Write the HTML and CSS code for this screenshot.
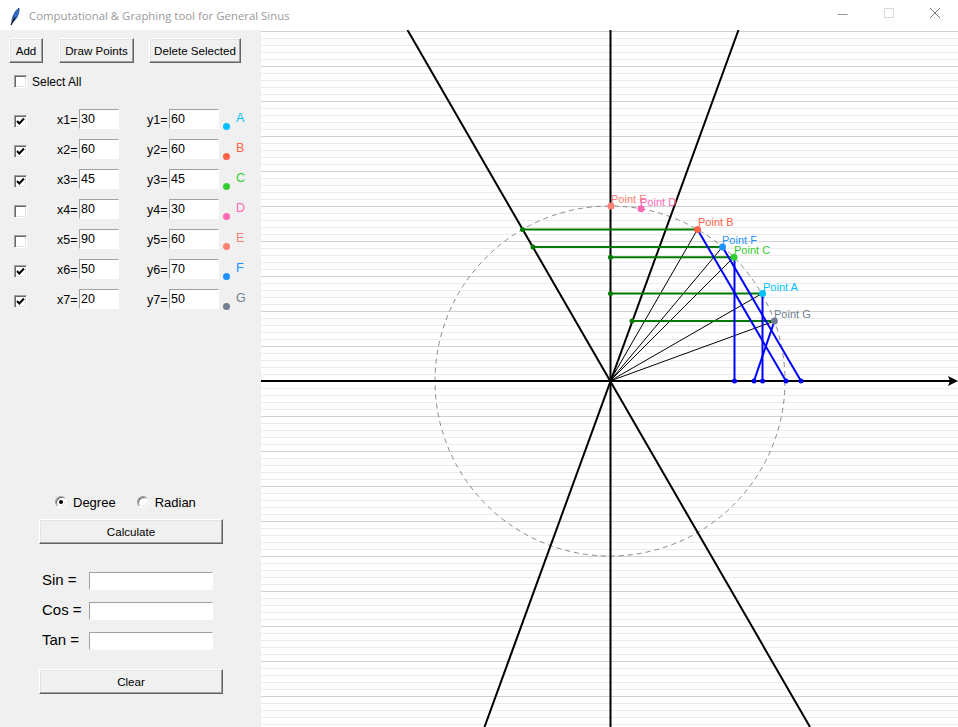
FILE: index.html
```html
<!DOCTYPE html>
<html>
<head>
<meta charset="utf-8">
<title>Computational &amp; Graphing tool for General Sinus</title>
<link rel="stylesheet" href="styles.css">
</head>
<body>
<div class="window">
  <div class="titlebar">
    <svg class="feather" width="20" height="24" viewBox="0 0 20 24">
      <path d="M5 20 C4.5 14 8 8 12 5 C12.5 10 10 16 5 20 Z" fill="#2f6fd0" stroke="#1b3f80" stroke-width="0.8"/>
      <path d="M4 22 L8 14" stroke="#111" stroke-width="1.2"/>
    </svg>
    <span class="title">Computational &amp; Graphing tool for General Sinus</span>
    <div class="controls">
      <svg width="46" height="30" viewBox="0 0 46 30"><path d="M17.5 14.5 H27.5" stroke="#9a9a9a" stroke-width="1"/></svg>
      <svg width="46" height="30" viewBox="0 0 46 30"><rect x="18.5" y="8.5" width="9" height="9" fill="none" stroke="#d8d8d8" stroke-width="1"/></svg>
      <svg width="46" height="30" viewBox="0 0 46 30"><path d="M18 8 L28 18 M28 8 L18 18" stroke="#777" stroke-width="1"/></svg>
    </div>
  </div>
  <div class="main">
    <div class="panel">
      <div class="toolbar">
        <button class="btn btn-add">Add</button>
        <button class="btn btn-draw">Draw Points</button>
        <button class="btn btn-del">Delete Selected</button>
      </div>
      <div class="selectall">
        <span class="check"></span>
        <span class="lbl">Select All</span>
      </div>
      <div class="points">
        <div class="prow">
          <span class="check checked"><svg width="11" height="11" viewBox="0 0 11 11"><path d="M2 5 L4.3 7.5 L9 2.5" fill="none" stroke="#000" stroke-width="2"/></svg></span>
          <span class="xl">x1=</span><span class="entry ex">30</span>
          <span class="yl">y1=</span><span class="entry ey">60</span>
          <span class="dot c-a"></span><span class="letter t-a">A</span>
        </div>
        <div class="prow">
          <span class="check checked"><svg width="11" height="11" viewBox="0 0 11 11"><path d="M2 5 L4.3 7.5 L9 2.5" fill="none" stroke="#000" stroke-width="2"/></svg></span>
          <span class="xl">x2=</span><span class="entry ex">60</span>
          <span class="yl">y2=</span><span class="entry ey">60</span>
          <span class="dot c-b"></span><span class="letter t-b">B</span>
        </div>
        <div class="prow">
          <span class="check checked"><svg width="11" height="11" viewBox="0 0 11 11"><path d="M2 5 L4.3 7.5 L9 2.5" fill="none" stroke="#000" stroke-width="2"/></svg></span>
          <span class="xl">x3=</span><span class="entry ex">45</span>
          <span class="yl">y3=</span><span class="entry ey">45</span>
          <span class="dot c-c"></span><span class="letter t-c">C</span>
        </div>
        <div class="prow">
          <span class="check"></span>
          <span class="xl">x4=</span><span class="entry ex">80</span>
          <span class="yl">y4=</span><span class="entry ey">30</span>
          <span class="dot c-d"></span><span class="letter t-d">D</span>
        </div>
        <div class="prow">
          <span class="check"></span>
          <span class="xl">x5=</span><span class="entry ex">90</span>
          <span class="yl">y5=</span><span class="entry ey">60</span>
          <span class="dot c-e"></span><span class="letter t-e">E</span>
        </div>
        <div class="prow">
          <span class="check checked"><svg width="11" height="11" viewBox="0 0 11 11"><path d="M2 5 L4.3 7.5 L9 2.5" fill="none" stroke="#000" stroke-width="2"/></svg></span>
          <span class="xl">x6=</span><span class="entry ex">50</span>
          <span class="yl">y6=</span><span class="entry ey">70</span>
          <span class="dot c-f"></span><span class="letter t-f">F</span>
        </div>
        <div class="prow">
          <span class="check checked"><svg width="11" height="11" viewBox="0 0 11 11"><path d="M2 5 L4.3 7.5 L9 2.5" fill="none" stroke="#000" stroke-width="2"/></svg></span>
          <span class="xl">x7=</span><span class="entry ex">20</span>
          <span class="yl">y7=</span><span class="entry ey">50</span>
          <span class="dot c-g"></span><span class="letter t-g">G</span>
        </div>
      </div>
      <div class="radios">
        <span class="radio on"></span><span class="rlbl">Degree</span>
        <span class="radio r2"></span><span class="rlbl">Radian</span>
      </div>
      <button class="btn wide btn-calc">Calculate</button>
      <div class="results">
        <div class="rrow"><span class="rlabel">Sin =</span><span class="entry rentry"></span></div>
        <div class="rrow"><span class="rlabel">Cos =</span><span class="entry rentry"></span></div>
        <div class="rrow"><span class="rlabel">Tan =</span><span class="entry rentry"></span></div>
      </div>
      <button class="btn wide btn-clear">Clear</button>
    </div>
    <div class="canvas">
      <svg class="plot" width="697" height="697" viewBox="261 30 697 697">
        <circle cx="610" cy="381" r="175" fill="none" stroke="#8a8a8a" stroke-width="1" stroke-dasharray="5 4"/>
        <line x1="610.5" y1="30" x2="610.5" y2="727" stroke="#000" stroke-width="2"/>
        <line x1="261" y1="381" x2="950" y2="381" stroke="#000" stroke-width="2"/>
        <polygon points="958,381 948,376 950,381 948,386" fill="#000"/>
        <line x1="407.5" y1="30" x2="810" y2="727" stroke="#000" stroke-width="2"/>
        <line x1="738.5" y1="30" x2="484.5" y2="727" stroke="#000" stroke-width="2"/>
        <g stroke="#000" stroke-width="1">
          <line x1="610" y1="381" x2="762" y2="293.5"/>
          <line x1="610" y1="381" x2="697.5" y2="229.4"/>
          <line x1="610" y1="381" x2="733.7" y2="257.3"/>
          <line x1="610" y1="381" x2="722.5" y2="246.9"/>
          <line x1="610" y1="381" x2="774.4" y2="321.1"/>
        </g>
        <g stroke="#007a00" stroke-width="2">
          <line x1="522.5" y1="229.4" x2="697.5" y2="229.4"/>
          <line x1="533" y1="246.9" x2="722.5" y2="246.9"/>
          <line x1="610" y1="257.3" x2="733.7" y2="257.3"/>
          <line x1="610" y1="293.5" x2="762" y2="293.5"/>
          <line x1="632" y1="321.1" x2="774.4" y2="321.1"/>
        </g>
        <g fill="#007a00">
          <circle cx="522.5" cy="229.4" r="2.5"/>
          <circle cx="533" cy="246.9" r="2.5"/>
          <circle cx="610.5" cy="257.3" r="2.5"/>
          <circle cx="610.5" cy="293.5" r="2.5"/>
          <circle cx="632" cy="321.1" r="2.5"/>
        </g>
        <g stroke="#0000ff" stroke-width="2">
          <line x1="762.5" y1="293.5" x2="762.5" y2="381"/>
          <line x1="734.5" y1="257.3" x2="734.5" y2="381"/>
          <line x1="697.5" y1="229.4" x2="786" y2="381"/>
          <line x1="722.5" y1="246.9" x2="801" y2="381"/>
          <line x1="774.4" y1="321.1" x2="754" y2="381"/>
        </g>
        <g fill="#0000ff">
          <circle cx="762.5" cy="381" r="2.5"/>
          <circle cx="734.5" cy="381" r="2.5"/>
          <circle cx="786" cy="381" r="2.5"/>
          <circle cx="801" cy="381" r="2.5"/>
          <circle cx="754" cy="381" r="2.5"/>
        </g>
        <circle cx="762.5" cy="293.5" r="3.5" fill="#00bfff"/>
        <circle cx="697.5" cy="229.4" r="3.5" fill="#ff6347"/>
        <circle cx="734" cy="257.3" r="3.5" fill="#32cd32"/>
        <circle cx="641" cy="208.7" r="3.5" fill="#ff69b4"/>
        <circle cx="611" cy="206" r="3.5" fill="#fa8072"/>
        <circle cx="722.5" cy="246.9" r="3.5" fill="#1e90ff"/>
        <circle cx="774.4" cy="321.1" r="3.5" fill="#708090"/>
        <g class="plabel">
          <text x="611" y="203" fill="#fa8072">Point E</text>
          <text x="640" y="206" fill="#ff69b4">Point D</text>
          <text x="698" y="226" fill="#ff6347">Point B</text>
          <text x="722" y="244" fill="#1e90ff">Point F</text>
          <text x="734" y="254" fill="#32cd32">Point C</text>
          <text x="763" y="291" fill="#00bfff">Point A</text>
          <text x="774" y="318" fill="#708090">Point G</text>
        </g>
      </svg>
    </div>
  </div>
</div>
</body>
</html>
```

FILE: styles.css
```css
* { box-sizing: border-box; }
html, body { margin: 0; padding: 0; }
body {
  width: 958px;
  height: 727px;
  overflow: hidden;
  background: #fff;
  font-family: "Liberation Sans", Arial, sans-serif;
  color: #000;
}
.window { width: 958px; height: 727px; display: flex; flex-direction: column; }

.titlebar {
  height: 30px;
  background: #fff;
  display: flex;
  align-items: center;
  flex: none;
}
.feather { margin-left: 7px; flex: none; }
.title {
  margin-left: 2px;
  font-family: "Open Sans", "Noto Sans", sans-serif;
  font-size: 11.4px;
  color: #9a9a9a;
}
.controls { margin-left: auto; display: flex; }
.controls svg { display: block; }

.main { display: flex; flex: 1; min-height: 0; }

.panel {
  width: 261px;
  flex: none;
  background: #f0f0f0;
  display: flex;
  flex-direction: column;
}

.btn {
  font-family: "Liberation Sans", Arial, sans-serif;
  font-size: 11.6px;
  color: #000;
  height: 25px;
  padding: 0;
  background: #f0f0f0;
  border: 1px solid;
  border-color: #fff #646464 #646464 #fff;
  box-shadow: inset -1px -1px 0 #a0a0a0, inset 1px 1px 0 #e3e3e3;
  border-radius: 0;
  flex: none;
}
.toolbar { display: flex; padding: 8px 0 0 9px; }
.btn-add { width: 34px; }
.btn-draw { width: 75px; margin-left: 16px; }
.btn-del { width: 92px; margin-left: 15px; }

.check {
  width: 13px;
  height: 13px;
  flex: none;
  background: #fff;
  border: 1px solid;
  border-color: #a0a0a0 #fff #fff #a0a0a0;
  box-shadow: inset 1px 1px 0 #696969, inset -1px -1px 0 #e3e3e3;
  display: flex;
  align-items: center;
  justify-content: center;
}
.check svg { display: block; }

.selectall {
  display: flex;
  align-items: center;
  height: 13px;
  margin-top: 12px;
  padding-left: 14px;
}
.selectall .lbl { margin-left: 5px; font-size: 12px; }

.points { margin-top: 21px; display: flex; flex-direction: column; gap: 10px; }
.prow {
  display: flex;
  align-items: flex-start;
  height: 20px;
  padding-left: 14px;
}
.prow .check { margin-top: 6px; }
.xl, .yl {
  font-size: 12.5px;
  line-height: 20px;
  padding-top: 1px;
  width: 22px;
  flex: none;
}
.xl { margin-left: 30px; }
.yl { margin-left: 28px; }
.entry {
  background: #fff;
  height: 20px;
  border: 1px solid;
  border-color: #a0a0a0 #fff #fff #a0a0a0;
  font-size: 12.5px;
  line-height: 18px;
  padding-left: 1px;
  flex: none;
}
.ex { width: 40px; }
.ey { width: 50px; }
.dot {
  width: 7px;
  height: 7px;
  border-radius: 50%;
  margin-left: 4px;
  margin-top: 14px;
  flex: none;
}
.letter {
  font-size: 12.5px;
  line-height: 14px;
  margin-left: 6px;
  margin-top: 2px;
}
.c-a { background: #00bfff; } .t-a { color: #00bfff; }
.c-b { background: #ff6347; } .t-b { color: #ff6347; }
.c-c { background: #32cd32; } .t-c { color: #32cd32; }
.c-d { background: #ff69b4; } .t-d { color: #ff69b4; }
.c-e { background: #fa8072; } .t-e { color: #fa8072; }
.c-f { background: #1e90ff; } .t-f { color: #1e90ff; }
.c-g { background: #708090; } .t-g { color: #708090; }

.radios {
  display: flex;
  align-items: center;
  height: 16px;
  margin-top: 185px;
  padding-left: 55px;
}
.radio {
  width: 12px;
  height: 12px;
  border-radius: 50%;
  background: #fff;
  border: 1px solid;
  border-color: #a0a0a0 #fff #fff #a0a0a0;
  box-shadow: inset 1px 1px 0 #696969, inset -1px -1px 0 #e3e3e3;
  display: flex;
  align-items: center;
  justify-content: center;
  flex: none;
}
.radio.on::after {
  content: "";
  width: 4px;
  height: 4px;
  border-radius: 50%;
  background: #000;
}
.rlbl { font-size: 13px; margin-left: 6px; }
.r2 { margin-left: 21px; }

.wide { width: 184px; margin-left: 39px; }
.btn-calc { margin-top: 9px; }
.btn-clear { margin-top: 19px; }

.results { margin-top: 28px; display: flex; flex-direction: column; gap: 12px; }
.rrow { display: flex; align-items: center; height: 18px; padding-left: 42px; }
.rlabel { font-size: 15px; line-height: 16px; width: 47px; flex: none; padding-bottom: 2px; }
.rentry { width: 124px; height: 18px; }

.canvas {
  flex: 1;
  height: 697px;
  background-color: #fff;
  background-image:
    repeating-linear-gradient(to bottom, #d0d0d0 0, #d0d0d0 1px, transparent 1px, transparent 35px),
    repeating-linear-gradient(to bottom, #ebebeb 0, #ebebeb 1px, transparent 1px, transparent 7px);
  background-position: 0 1px, 0 1px;
  overflow: hidden;
}
.plot { display: block; }
.plabel text {
  font-family: "Liberation Sans", Arial, sans-serif;
  font-size: 11px;
}
```
